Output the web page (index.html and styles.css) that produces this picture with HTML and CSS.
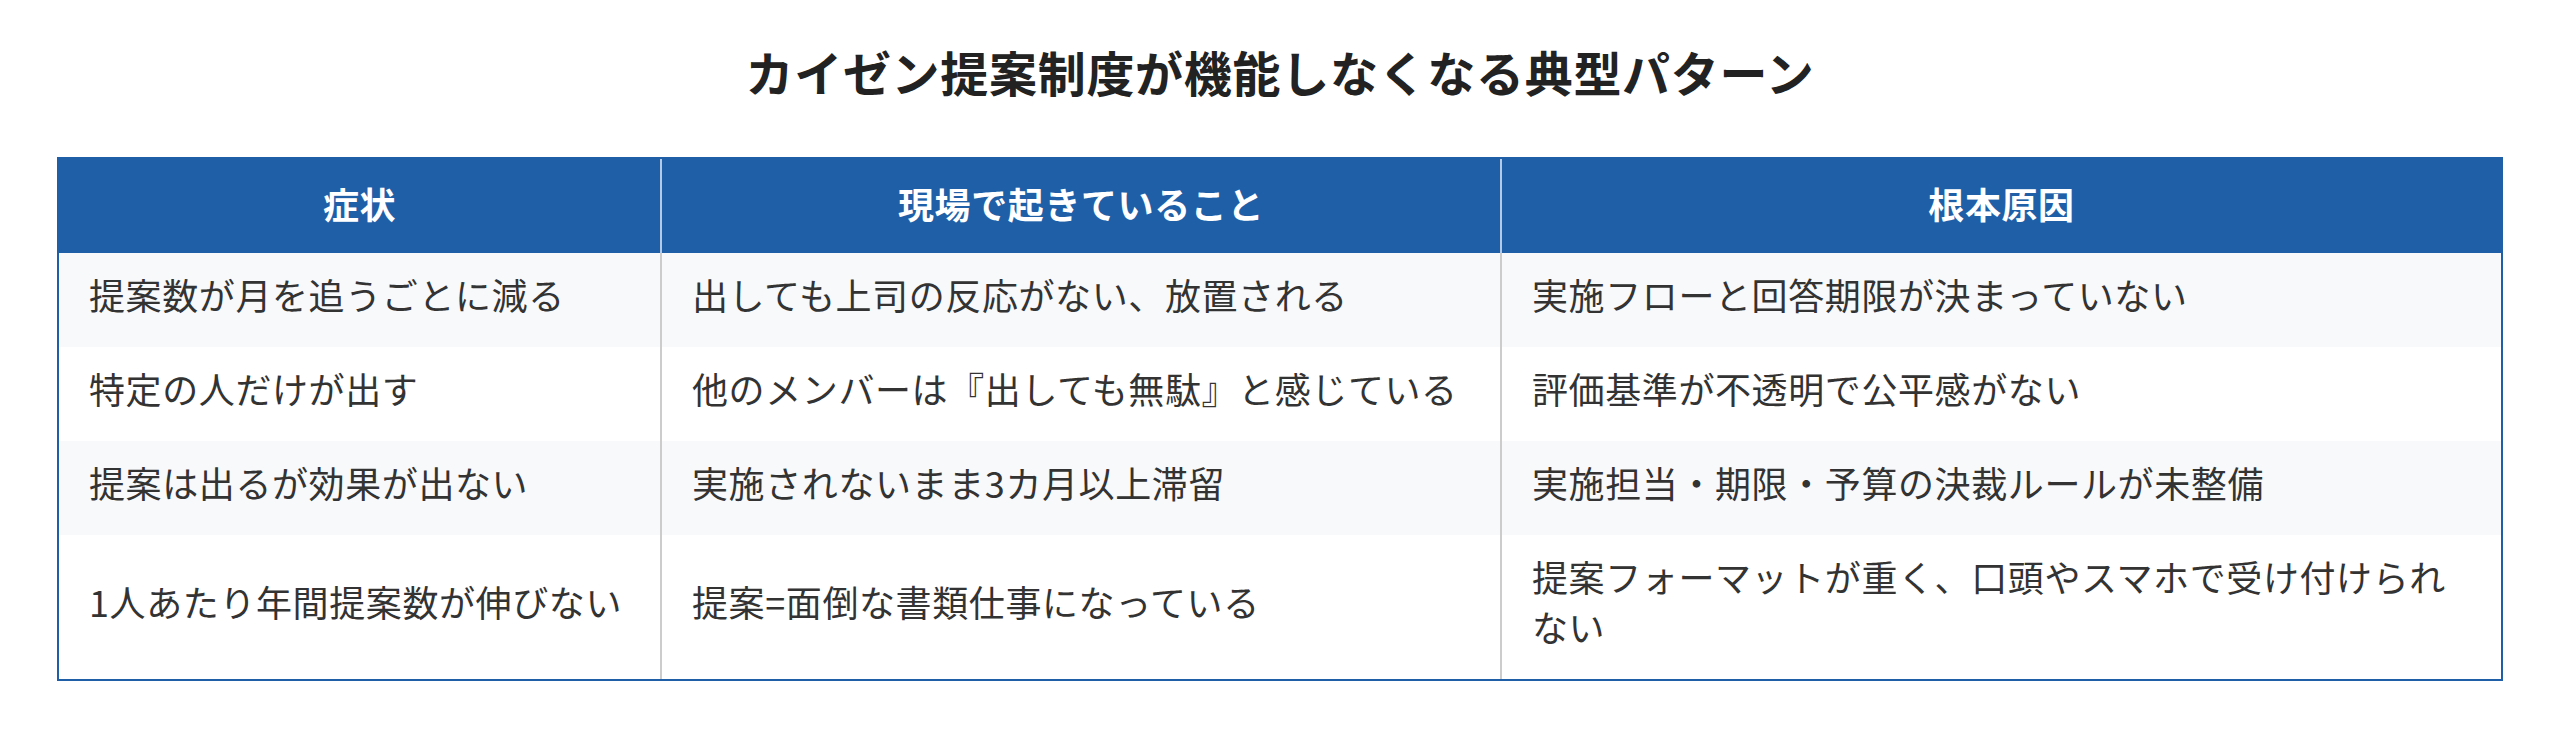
FILE: index.html
```html
<!DOCTYPE html>
<html lang="ja">
<head>
<meta charset="utf-8">
<title>カイゼン提案制度が機能しなくなる典型パターン</title>
<link rel="stylesheet" href="styles.css">
</head>
<body>
<main class="page">
  <h2 class="title">カイゼン提案制度が機能しなくなる典型パターン</h2>
  <table class="pattern-table">
    <colgroup>
      <col class="col-symptom">
      <col class="col-field">
      <col class="col-cause">
    </colgroup>
    <thead>
      <tr>
        <th>症状</th>
        <th>現場で起きていること</th>
        <th>根本原因</th>
      </tr>
    </thead>
    <tbody>
      <tr>
        <td>提案数が月を追うごとに減る</td>
        <td>出しても上司の反応がない、放置される</td>
        <td>実施フローと回答期限が決まっていない</td>
      </tr>
      <tr>
        <td>特定の人だけが出す</td>
        <td>他のメンバーは『出しても無駄』と感じている</td>
        <td>評価基準が不透明で公平感がない</td>
      </tr>
      <tr>
        <td>提案は出るが効果が出ない</td>
        <td>実施されないまま3カ月以上滞留</td>
        <td>実施担当・期限・予算の決裁ルールが未整備</td>
      </tr>
      <tr>
        <td>1人あたり年間提案数が伸びない</td>
        <td>提案=面倒な書類仕事になっている</td>
        <td>提案フォーマットが重く、口頭やスマホで受け付けられない</td>
      </tr>
    </tbody>
  </table>
</main>
</body>
</html>
```

FILE: styles.css
```css
html, body {
  margin: 0;
  padding: 0;
  background: #ffffff;
}

.page {
  padding: 0 57px;
  font-family: "Noto Sans CJK JP", "Noto Sans", sans-serif;
  color: #333333;
}

.title {
  margin: 38px 0 52px;
  font-size: 48px;
  line-height: 67px;
  font-weight: 700;
  letter-spacing: 0.7px;
  text-align: center;
  color: #222222;
}

.pattern-table {
  width: 100%;
  table-layout: fixed;
  border-collapse: separate;
  border-spacing: 0;
  border: 2px solid #1f5fa8;
}

.col-symptom { width: 603px; }
.col-field { width: 840px; }

.pattern-table th,
.pattern-table td {
  font-size: 36px;
  line-height: 50px;
  letter-spacing: 0.6px;
  text-align: left;
  vertical-align: middle;
}

.pattern-table th {
  padding: 19px 30px 25px;
  background: #1f5fa8;
  color: #ffffff;
  font-weight: 700;
  text-align: center;
  border-right: 2px solid #b5cbe5;
}

.pattern-table td {
  padding: 16px 30px 28px;
  border-right: 2px solid #cccccc;
  color: #333333;
}

.pattern-table th:last-child,
.pattern-table td:last-child {
  border-right: none;
}

.pattern-table td:last-child {
  padding-right: 40px;
}

.pattern-table tbody tr:nth-child(odd) td {
  background: #f8f9fb;
}

.pattern-table tbody tr:nth-child(even) td {
  background: #ffffff;
}
```
